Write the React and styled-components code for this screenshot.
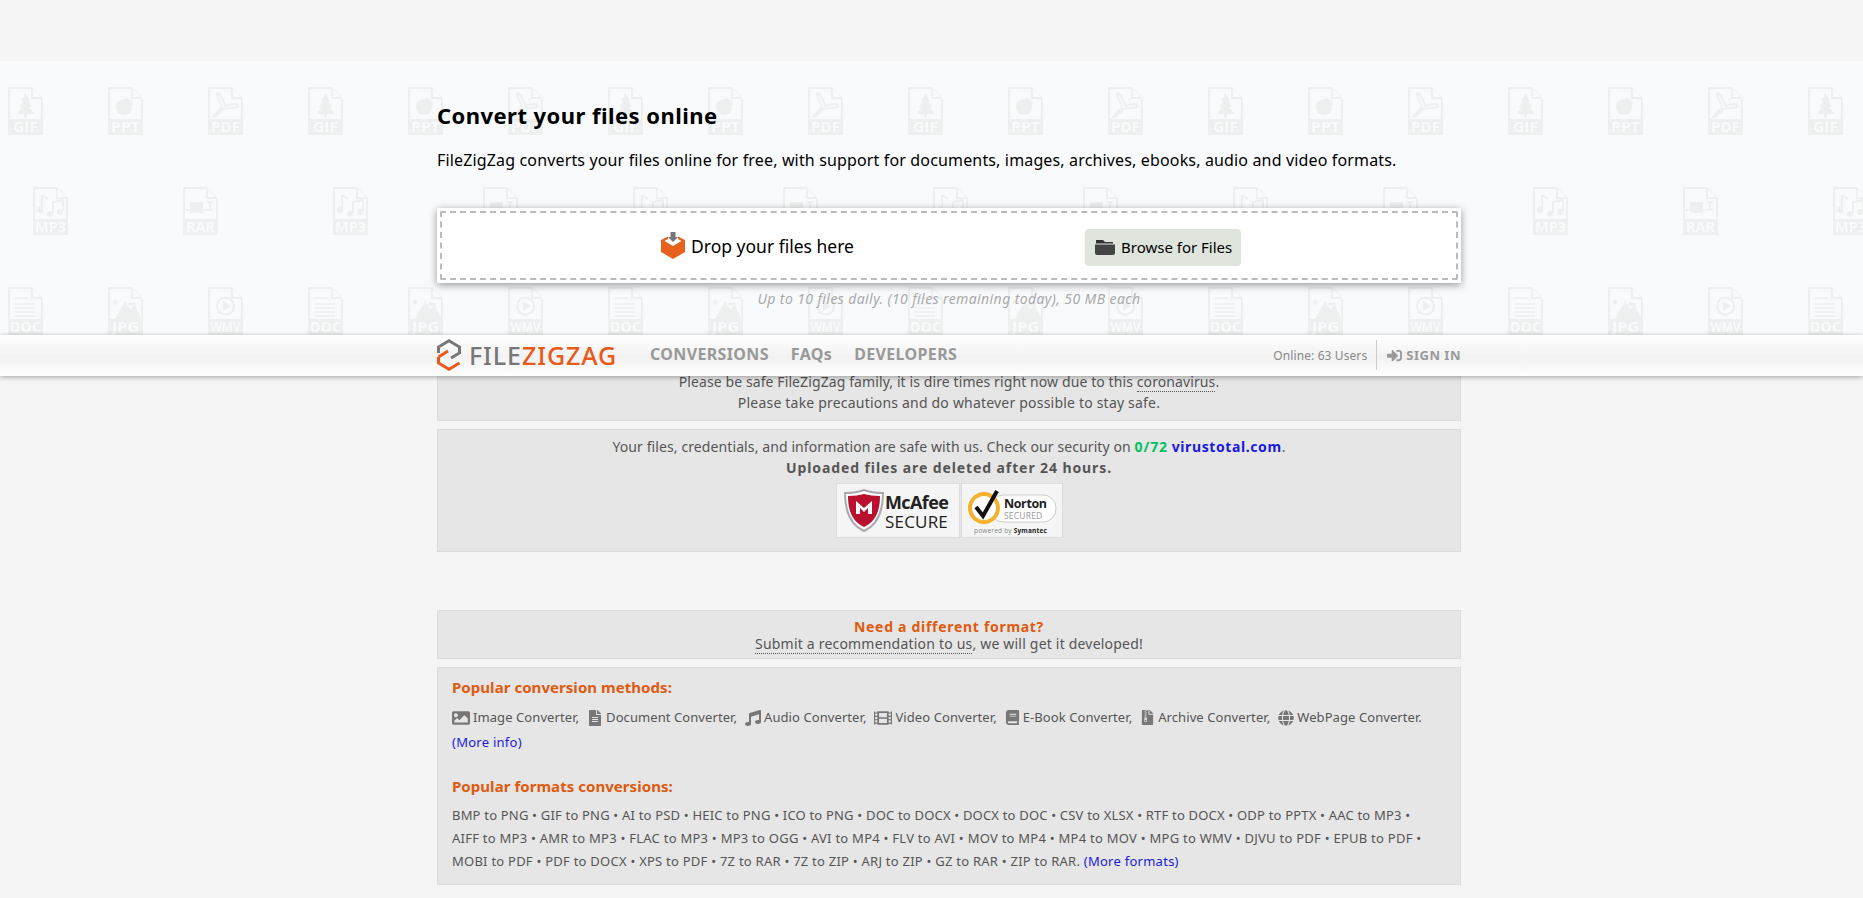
import React from "react";
import styled, { createGlobalStyle } from "styled-components";
import { FaImage, FaFileAlt, FaMusic, FaFilm, FaBook, FaFileArchive, FaGlobe, FaSignInAlt } from "react-icons/fa";

const GlobalStyle = createGlobalStyle`
  html, body {
    margin: 0;
    padding: 0;
    height: 898px;
    overflow: hidden;
    background: #f5f5f5;
    font-family: "Noto Sans", "DejaVu Sans", sans-serif;
    color: #555;
  }
`;

const Hero = styled.section`
  position: relative;
  margin-top: 61px;
  height: 274px;
  background: #f9fafc;
  overflow: hidden;
`;

const Pattern = styled.svg`
  position: absolute;
  left: 0;
  top: 0;
  width: 100%;
  height: 100%;
`;

const HeroInner = styled.div`
  position: relative;
  width: 1024px;
  margin-left: 437px;
  padding-top: 39px;
`;

const Title = styled.h1`
  margin: 0;
  font-size: 22px;
  line-height: 30px;
  font-weight: 700;
  color: #000;
  letter-spacing: 0.45px;
`;

const Lead = styled.p`
  margin: 15px 0 0;
  font-size: 16px;
  line-height: 30px;
  color: #000;
  letter-spacing: 0.15px;
`;

const DropBox = styled.div`
  margin-top: 33px;
  height: 75px;
  box-sizing: border-box;
  padding: 3px;
  background: #fff;
  box-shadow: 0 2px 8px rgba(0, 0, 0, 0.4);
`;

const DropInner = styled.div`
  height: 100%;
  box-sizing: border-box;
  border: 2px dashed #bbb;
  border-radius: 2px;
  display: flex;
  align-items: center;
  padding-left: 219px;
`;

const DropLabel = styled.div`
  display: flex;
  align-items: center;
  gap: 6px;
  width: 424px;
  font-size: 17.5px;
  color: #000;
`;

const BrowseButton = styled.button`
  display: flex;
  align-items: center;
  gap: 6px;
  width: 156px;
  height: 37px;
  margin-top: 3px;
  padding: 0 0 0 10px;
  border: 0;
  border-radius: 4px;
  background: #dfe4dd;
  font: inherit;
  font-size: 15px;
  color: #000;
`;

const Limit = styled.p`
  margin: 5px 0 0;
  font-size: 14px;
  line-height: 21px;
  font-style: italic;
  color: #aaa;
  letter-spacing: 0.4px;
  text-align: center;
`;

const Nav = styled.nav`
  position: relative;
  z-index: 2;
  height: 41px;
  box-sizing: border-box;
  padding-left: 437px;
  display: flex;
  background: linear-gradient(#fff 0%, #f3f3f3 50%, #f1f1f1 50%, #fff 100%);
  box-shadow: 0 1px 5px rgba(0, 0, 0, 0.35);
`;

const NavInner = styled.div`
  width: 1024px;
  box-sizing: border-box;
  padding-bottom: 1px;
  display: flex;
  align-items: center;
`;

const Brand = styled.a`
  display: flex;
  align-items: center;
  gap: 8px;
  width: 213px;
  font-size: 25px;
  font-weight: 500;
  letter-spacing: 0.9px;
  color: #777;
`;

const BrandAccent = styled.span`
  color: #e8591a;
`;

const NavLink = styled.a`
  margin-right: 22px;
  padding-bottom: 2px;
  font-size: 16px;
  font-weight: 700;
  letter-spacing: 0.35px;
  color: #999;
`;

const NavRight = styled.div`
  margin-left: auto;
  display: flex;
  align-items: center;
  height: 30px;
  font-size: 12px;
  letter-spacing: 0.1px;
  color: #888;
`;

const SignIn = styled.a`
  display: flex;
  align-items: center;
  gap: 4px;
  height: 100%;
  margin-left: 9px;
  padding-left: 10px;
  border-left: 1px solid #ccc;
  font-size: 13px;
  font-weight: 700;
  letter-spacing: 0.5px;
  color: #999;
`;

const Column = styled.main`
  width: 1024px;
  margin-left: 437px;
`;

const Panel = styled.section`
  box-sizing: border-box;
  margin-top: ${(p) => p.$top}px;
  padding: ${(p) => p.$padding};
  background: #e6e6e6;
  border: 1px solid #dcdcdc;
  font-size: 14px;
  line-height: ${(p) => p.$line || 21}px;
  letter-spacing: 0.2px;
  text-align: ${(p) => p.$align || "center"};
`;

const Row = styled.div`
  letter-spacing: ${(p) => p.$spacing ?? 0.2}px;
`;

const Dotted = styled.a`
  border-bottom: 1px dotted #555;
`;

const Strong = styled.strong`
  letter-spacing: 0.9px;
`;

const Score = styled.strong`
  color: #00c060;
  letter-spacing: 0.9px;
`;

const Blue = styled.a`
  color: #1a1ae0;
  font-weight: ${(p) => (p.$bold ? 700 : 400)};
  letter-spacing: ${(p) => (p.$bold ? 0.6 : 0.26)}px;
`;

const Seals = styled.div`
  display: flex;
  justify-content: center;
  gap: 1px;
  margin-top: 5px;
`;

const Seal = styled.div`
  width: ${(p) => p.$width}px;
  height: 55px;
  box-sizing: border-box;
  background: #f5f5f5;
  border: 1px solid #dcdcdc;
`;

const Heading = styled.h3`
  margin: ${(p) => p.$top}px 0 0;
  font-size: 15px;
  line-height: 21px;
  font-weight: 700;
  letter-spacing: 0.05px;
  color: #e05a0f;
`;

const MethodList = styled.div`
  display: flex;
  gap: 8px;
  margin-top: 9px;
  font-size: 13px;
  line-height: 21px;
  letter-spacing: 0.08px;
`;

const Method = styled.span`
  display: flex;
  align-items: center;
  gap: 3px;
  white-space: nowrap;
  svg {
    color: #777;
    font-size: ${(p) => p.$icon}px;
  }
`;

const More = styled.div`
  margin-top: 4px;
  font-size: 13px;
  line-height: 21px;
`;

const Formats = styled.div`
  margin-top: 7px;
  font-size: 13px;
  line-height: 23px;
`;

const FormatLine = styled.div`
  white-space: nowrap;
  letter-spacing: ${(p) => p.$spacing}px;
`;

const Accent = styled.strong`
  color: #e05a0f;
  letter-spacing: 0.7px;
`;

const ICON = "#eeefef";
const PAPER = "#f9fafc";

function Doc({ x, y, label, width, children }) {
  return (
    <g transform={`translate(${x} ${y})`}>
      <path d="M0 0H24L35 11V48H0Z" fill={ICON} />
      <path d="M2 2H23V12H33V32H2Z" fill={PAPER} />
      <path d="M25 2L33 10H25Z" fill={PAPER} />
      {children}
      <text
        x="17.5"
        y="45"
        textAnchor="middle"
        fontSize="15"
        fontWeight="700"
        fontFamily="Open Sans, sans-serif"
        fill={PAPER}
        textLength={width}
        lengthAdjust="spacingAndGlyphs"
      >
        {label}
      </text>
    </g>
  );
}

function FilePattern() {
  return (
    <Pattern aria-hidden="true">
      <defs>
        <pattern id="files" width="300" height="300" patternUnits="userSpaceOnUse">
          <Doc x={8} y={26} label="GIF" width={25}>
            <path d="M17.5 7L22 14H20L24 20H21.5L26 27H19V31H16V27H9L13.5 20H11L15 14H13Z" fill={ICON} />
          </Doc>
          <Doc x={108} y={26} label="PPT" width={29}>
            <circle cx="16" cy="20" r="8" fill={ICON} />
            <path d="M18 10L25 14V18H18Z" fill={ICON} opacity="0.7" />
          </Doc>
          <Doc x={208} y={26} label="PDF" width={29}>
            <path d="M10 6C8 6 9 11 14 19C11 25 6 27 5 30C8 31 13 24 15 22C21 20 30 22 30 19C30 16 22 17 18 19C15 15 12 6 10 6Z" fill="none" stroke={ICON} strokeWidth="2" />
          </Doc>
          <Doc x={33} y={126} label="MP3" width={31}>
            <path d="M9 8V22M9 8L15 12M20 15V26M30 13V24M20 15L30 13" fill="none" stroke={ICON} strokeWidth="2" />
            <circle cx="7" cy="23" r="3" fill={ICON} />
            <circle cx="17" cy="27" r="3" fill={ICON} />
            <circle cx="27" cy="25" r="3" fill={ICON} />
          </Doc>
          <Doc x={183} y={126} label="RAR" width={29}>
            <path d="M7 15H20V26H7Z" fill={ICON} />
            <path d="M3 23H28M24 15H30M27 15V23M24 23H30" stroke={ICON} strokeWidth="1.6" fill="none" />
          </Doc>
          <Doc x={8} y={226} label="DOC" width={31}>
            <path d="M7 11H20M7 17H27M7 21H27M7 25H27M7 29H27" stroke={ICON} strokeWidth="1.5" />
          </Doc>
          <Doc x={108} y={226} label="JPG" width={27}>
            <circle cx="7" cy="15" r="2.5" fill={ICON} />
            <path d="M7 32L17 14L22 22L27 18L33 32Z" fill={ICON} />
            <ellipse cx="24" cy="17" rx="4" ry="1.5" fill={ICON} />
          </Doc>
          <Doc x={208} y={226} label="WMV" width={30}>
            <circle cx="17.5" cy="19" r="8.5" fill="none" stroke={ICON} strokeWidth="2" />
            <path d="M15 14L23 19L15 24Z" fill={ICON} />
          </Doc>
        </pattern>
      </defs>
      <rect width="100%" height="100%" fill="url(#files)" />
    </Pattern>
  );
}

function DropIcon() {
  return (
    <svg width="24" height="27" viewBox="0 0 24 27">
      <path d="M0 8L7 4.5V7L3.5 9L12 14L20.5 9L17 7V4.5L24 8V20L12 27L0 20Z" fill="#e8611c" />
      <path d="M9.5 0H14.5V5H17L12 10L7 5H9.5Z" fill="#777" />
    </svg>
  );
}

function FolderIcon() {
  return (
    <svg width="20" height="16" viewBox="0 0 20 16">
      <path d="M1 1H8L10 3H18V4.5H1Z" fill="#333" />
      <path d="M0 5.5H20V14C20 15 19 16 18 16H2C1 16 0 15 0 14Z" fill="#444" />
    </svg>
  );
}

function LogoMark() {
  return (
    <svg width="24" height="32" viewBox="0 0 24 32">
      <path d="M1.5 14V8L12 1.8L22.5 8V14L14 19" fill="none" stroke="#777" strokeWidth="3" />
      <path d="M1.5 18V24L12 30.2L22.5 24" fill="none" stroke="#e8591a" strokeWidth="3" />
      <path d="M1.5 18L11 12" fill="none" stroke="#e8591a" strokeWidth="3" />
    </svg>
  );
}

function McAfeeSeal() {
  return (
    <svg width="122" height="53" viewBox="0 0 122 53">
      <path d="M8 9C16 9 22 8 27 6C32 8 38 9 46 9C46 28 40 41 27 47C14 41 8 28 8 9Z" fill="#fff" stroke="#aaa" strokeWidth="2" />
      <path d="M11 12C17 12 23 11 27 10C31 11 37 12 43 12C43 28 38 38 27 43C16 38 11 28 11 12Z" fill="#b8102e" />
      <path d="M19 30V17L27 24L35 17V30H31V24L27 28L23 24V30Z" fill="#fff" />
      <text x="48" y="25" fontSize="18" fontWeight="700" fontFamily="Open Sans, sans-serif" fill="#222" letterSpacing="-0.6">McAfee</text>
      <text x="48" y="44" fontSize="17" fontFamily="Open Sans, sans-serif" fill="#222">SECURE</text>
    </svg>
  );
}

function NortonSeal() {
  return (
    <svg width="100" height="53" viewBox="0 0 100 53">
      <rect x="28" y="11" width="66" height="27" rx="13" fill="#fff" stroke="#ccc" />
      <circle cx="22" cy="24" r="14" fill="#fff" stroke="#f4b02e" strokeWidth="4" />
      <path d="M14 23L21 32L35 7" fill="none" stroke="#111" strokeWidth="4" />
      <text x="42" y="24" fontSize="12.5" fontWeight="700" fontFamily="Open Sans, sans-serif" fill="#222" letterSpacing="-0.4">Norton</text>
      <text x="42" y="35" fontSize="8.5" fontFamily="Open Sans, sans-serif" fill="#999">SECURED</text>
      <text x="12" y="49" fontSize="6.5" fontFamily="Open Sans, sans-serif" fill="#888">powered by <tspan fill="#222" fontWeight="700">Symantec</tspan></text>
    </svg>
  );
}

const methods = [
  { icon: FaImage, size: 18, label: "Image Converter," },
  { icon: FaFileAlt, size: 16, label: "Document Converter," },
  { icon: FaMusic, size: 16, label: "Audio Converter," },
  { icon: FaFilm, size: 18, label: "Video Converter," },
  { icon: FaBook, size: 15, label: "E-Book Converter," },
  { icon: FaFileArchive, size: 15, label: "Archive Converter," },
  { icon: FaGlobe, size: 16, label: "WebPage Converter." },
];

const formatLines = [
  { spacing: 0.19, items: ["BMP to PNG", "GIF to PNG", "AI to PSD", "HEIC to PNG", "ICO to PNG", "DOC to DOCX", "DOCX to DOC", "CSV to XLSX", "RTF to DOCX", "ODP to PPTX", "AAC to MP3"] },
  { spacing: 0.25, items: ["AIFF to MP3", "AMR to MP3", "FLAC to MP3", "MP3 to OGG", "AVI to MP4", "FLV to AVI", "MOV to MP4", "MP4 to MOV", "MPG to WMV", "DJVU to PDF", "EPUB to PDF"] },
  { spacing: 0.24, items: ["MOBI to PDF", "PDF to DOCX", "XPS to PDF", "7Z to RAR", "7Z to ZIP", "ARJ to ZIP", "GZ to RAR", "ZIP to RAR."] },
];

export default function App() {
  return (
    <>
      <GlobalStyle />
      <Hero>
        <FilePattern />
        <HeroInner>
          <Title>Convert your files online</Title>
          <Lead>FileZigZag converts your files online for free, with support for documents, images, archives, ebooks, audio and video formats.</Lead>
          <DropBox>
            <DropInner>
              <DropLabel>
                <DropIcon />
                Drop your files here
              </DropLabel>
              <BrowseButton>
                <FolderIcon />
                Browse for Files
              </BrowseButton>
            </DropInner>
          </DropBox>
          <Limit>Up to 10 files daily. (10 files remaining today), 50 MB each</Limit>
        </HeroInner>
      </Hero>
      <Nav>
        <NavInner>
          <Brand>
            <LogoMark />
            <span>
              FILE<BrandAccent>ZIGZAG</BrandAccent>
            </span>
          </Brand>
          <NavLink>CONVERSIONS</NavLink>
          <NavLink>FAQs</NavLink>
          <NavLink>DEVELOPERS</NavLink>
          <NavRight>
            Online: 63 Users
            <SignIn>
              <FaSignInAlt size={15} />
              SIGN IN
            </SignIn>
          </NavRight>
        </NavInner>
      </Nav>
      <Column>
        <Panel $top={-21} $padding="15px 0 7px">
          <Row $spacing={0.1}>
            Please be safe FileZigZag family, it is dire times right now due to this <Dotted>coronavirus</Dotted>.
          </Row>
          <Row>Please take precautions and do whatever possible to stay safe.</Row>
        </Panel>
        <Panel $top={8} $padding="6px 0 13px">
          <Row $spacing={0.1}>
            Your files, credentials, and information are safe with us. Check our security on <Score>0/72</Score> <Blue $bold>virustotal.com</Blue>.
          </Row>
          <Row>
            <Strong>Uploaded files are deleted after 24 hours.</Strong>
          </Row>
          <Seals>
            <Seal $width={124}>
              <McAfeeSeal />
            </Seal>
            <Seal $width={102}>
              <NortonSeal />
            </Seal>
          </Seals>
        </Panel>
        <Panel $top={58} $padding="7px 0 6px" $line={17}>
          <Row>
            <Accent>Need a different format?</Accent>
          </Row>
          <Row>
            <Dotted>Submit a recommendation to us</Dotted>, we will get it developed!
          </Row>
        </Panel>
        <Panel $top={8} $padding="9px 14px 11px" $align="left">
          <Heading $top={0}>Popular conversion methods:</Heading>
          <MethodList>
            {methods.map((m) => (
              <Method key={m.label} $icon={m.size}>
                <m.icon />
                {m.label}
              </Method>
            ))}
          </MethodList>
          <More>
            <Blue>(More info)</Blue>
          </More>
          <Heading $top={23}>Popular formats conversions:</Heading>
          <Formats>
            {formatLines.map((line, i) => (
              <FormatLine key={i} $spacing={line.spacing}>
                {line.items.join(" • ")}
                {i < 2 ? " •" : " "}
                {i === 2 && <Blue>(More formats)</Blue>}
              </FormatLine>
            ))}
          </Formats>
        </Panel>
      </Column>
    </>
  );
}
